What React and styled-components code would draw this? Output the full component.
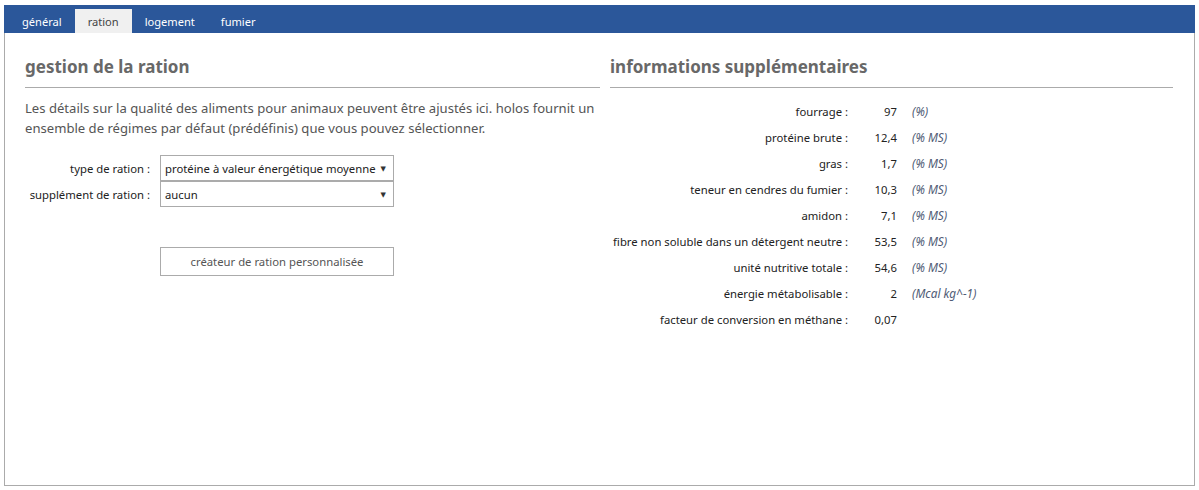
import React from "react";
import styled, { createGlobalStyle } from "styled-components";

const Global = createGlobalStyle`
  html, body { margin: 0; padding: 0; background: #ffffff; }
  body { font-family: "Noto Sans", "Open Sans", "DejaVu Sans", sans-serif; color: #222; }
  * { box-sizing: border-box; }
`;

const Page = styled.div`
  width: 1191px;
  margin: 5px 0 0 4px;
`;

const TabBar = styled.div`
  height: 28px;
  background: #2b579a;
  display: flex;
  align-items: flex-end;
  padding-left: 5px;
`;

const Tab = styled.div`
  height: 24px;
  padding: 0 13px;
  display: flex;
  align-items: center;
  font-size: 11.1px;
  color: ${(p) => (p.$active ? "#444444" : "#ffffff")};
  background: ${(p) => (p.$active ? "#f0f0f0" : "transparent")};
`;

const Panel = styled.div`
  height: 453px;
  border: 1px solid #ababab;
  border-top: none;
  display: grid;
  grid-template-columns: 575px 563px;
  column-gap: 10px;
  padding: 20px 0 0 20px;
  align-items: start;
`;

const Column = styled.div`
  display: flex;
  flex-direction: column;
`;

const Heading = styled.h2`
  margin: 0;
  font-size: 17px;
  font-weight: 700;
  line-height: 28px;
  color: #686868;
  padding-bottom: 6px;
  border-bottom: 1px solid #ababab;
`;

const Intro = styled.p`
  margin: 10px 0 0 0;
  font-size: 13.1px;
  line-height: 20px;
  color: #555555;
`;

const Form = styled.div`
  margin-top: 17px;
  display: grid;
  grid-template-columns: 125px 234px;
  column-gap: 10px;
  align-items: center;
`;

const Label = styled.div`
  font-size: 11.3px;
  color: #222;
  text-align: right;
  white-space: nowrap;
`;

const Select = styled.div`
  height: 26px;
  border: 1px solid #ababab;
  display: flex;
  align-items: center;
  justify-content: space-between;
  padding: 0 7px 0 4px;
  font-size: 11.3px;
  color: #222;
  background: #fff;
  white-space: nowrap;
`;

const Arrow = styled.span`
  font-size: 7px;
  color: #333;
`;

const Button = styled.div`
  grid-column: 2;
  margin-top: 40px;
  height: 29px;
  border: 1px solid #ababab;
  display: flex;
  align-items: center;
  justify-content: center;
  font-size: 11.3px;
  color: #555;
`;

const InfoGrid = styled.div`
  margin-top: 10px;
  display: grid;
  grid-template-columns: 238px 49px auto;
  grid-auto-rows: 26px;
  align-items: center;
`;

const InfoLabel = styled.div`
  font-size: 11.3px;
  color: #222;
  text-align: right;
  white-space: nowrap;
`;

const InfoValue = styled.div`
  font-size: 11.3px;
  color: #222;
  text-align: right;
`;

const InfoUnit = styled.div`
  font-size: 11.8px;
  font-style: italic;
  color: #4f5b75;
  padding-left: 15px;
  white-space: nowrap;
`;

const rows = [
  ["fourrage :", "97", "(%)"],
  ["protéine brute :", "12,4", "(% MS)"],
  ["gras :", "1,7", "(% MS)"],
  ["teneur en cendres du fumier :", "10,3", "(% MS)"],
  ["amidon :", "7,1", "(% MS)"],
  ["fibre non soluble dans un détergent neutre :", "53,5", "(% MS)"],
  ["unité nutritive totale :", "54,6", "(% MS)"],
  ["énergie métabolisable :", "2", "(Mcal kg^-1)"],
  ["facteur de conversion en méthane :", "0,07", ""],
];

export default function App() {
  return (
    <>
      <Global />
      <Page>
        <TabBar>
          <Tab>général</Tab>
          <Tab $active>ration</Tab>
          <Tab>logement</Tab>
          <Tab>fumier</Tab>
        </TabBar>
        <Panel>
          <Column>
            <Heading>gestion de la ration</Heading>
            <Intro>
              Les détails sur la qualité des aliments pour animaux peuvent être ajustés ici. holos fournit un
              ensemble de régimes par défaut (prédéfinis) que vous pouvez sélectionner.
            </Intro>
            <Form>
              <Label>type de ration :</Label>
              <Select>
                protéine à valeur énergétique moyenne <Arrow>▼</Arrow>
              </Select>
              <Label>supplément de ration :</Label>
              <Select>
                aucun <Arrow>▼</Arrow>
              </Select>
              <Button>créateur de ration personnalisée</Button>
            </Form>
          </Column>
          <Column>
            <Heading>informations supplémentaires</Heading>
            <InfoGrid>
              {rows.map(([l, v, u]) => (
                <React.Fragment key={l}>
                  <InfoLabel>{l}</InfoLabel>
                  <InfoValue>{v}</InfoValue>
                  <InfoUnit>{u}</InfoUnit>
                </React.Fragment>
              ))}
            </InfoGrid>
          </Column>
        </Panel>
      </Page>
    </>
  );
}
